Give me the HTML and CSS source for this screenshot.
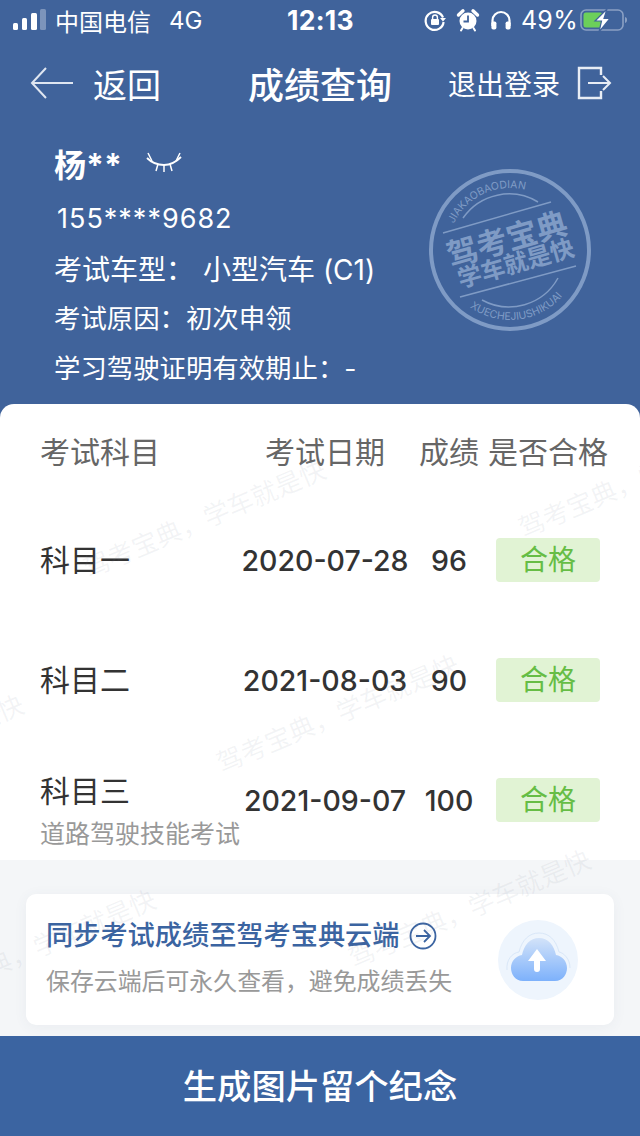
FILE: index.html
```html
<!DOCTYPE html>
<html lang="zh-CN">
<head>
  <meta charset="UTF-8" />
  <meta name="viewport" content="width=device-width, initial-scale=1.0" />
  <title>成绩查询</title>
  <link rel="stylesheet" href="styles.css">
</head>
<body>
  <div class="page">
    <header class="top">
      <div class="status">
        <div class="status-left">
          <svg class="signal" width="34" height="22" viewBox="0 0 34 22">
            <rect x="0" y="14" width="5" height="7" rx="1.5" fill="#fff"/>
            <rect x="9" y="9" width="5" height="12" rx="1.5" fill="#fff"/>
            <rect x="18" y="4" width="6" height="17" rx="1.5" fill="#fff"/>
            <rect x="27" y="0" width="6" height="21" rx="1.5" fill="#7c94bb"/>
          </svg>
          <span class="carrier">中国电信</span>
          <span class="net">4G</span>
        </div>
        <div class="clock">12:13</div>
        <div class="status-right">
          <svg width="24" height="24" viewBox="0 0 24 24" fill="none">
            <path d="M20 9.500A9 9 0 1 0 20.600 14" stroke="#fff" stroke-width="2.200"/>
            <path d="M17 10h6l-3 3.400z" fill="#fff"/>
            <rect x="8" y="11" width="8" height="6" rx="1" fill="#fff"/>
            <path d="M9.600 11V9.400a2.400 2.400 0 0 1 4.800 0V11" stroke="#fff" stroke-width="1.400"/>
          </svg>
          <svg width="24" height="24" viewBox="0 0 24 24" fill="none">
            <circle cx="12" cy="13" r="8.500" fill="#fff"/>
            <path d="M12 7.500V13.500H7.500" stroke="#40639b" stroke-width="1.800"/>
            <path d="M2.500 7 7 2.800M21.500 7 17 2.800" stroke="#fff" stroke-width="3.400" stroke-linecap="round"/>
            <path d="M6.500 20 5 22.500M17.500 20 19 22.500" stroke="#fff" stroke-width="2" stroke-linecap="round"/>
          </svg>
          <svg width="24" height="24" viewBox="0 0 24 24" fill="none">
            <path d="M3.500 18v-5.500a8.500 8.500 0 0 1 17 0V18" stroke="#fff" stroke-width="2.200"/>
            <rect x="2.400" y="13.500" width="5" height="8" rx="1.800" fill="#fff"/>
            <rect x="16.600" y="13.500" width="5" height="8" rx="1.800" fill="#fff"/>
          </svg>
          <span class="pct">49%</span>
          <svg class="battery" width="48" height="26" viewBox="0 0 48 26" fill="none">
            <rect x="1" y="3" width="42" height="20" rx="5" stroke="#8aa0c4" stroke-width="1.600"/>
            <rect x="3.500" y="5.500" width="19" height="15" rx="2.500" fill="#6ccf5a"/>
            <path d="M45 10c1.600.4 2 1.600 2 3s-.4 2.600-2 3z" fill="#8aa0c4"/>
            <path d="M27 2 15 14H21.500L19 25 30 11.500H24z" fill="#fff" stroke="#40639b" stroke-width="1.200"/>
          </svg>
        </div>
      </div>

      <nav class="nav">
        <div class="nav-back">
          <svg width="44" height="34" viewBox="0 0 44 34" fill="none" stroke="#dfe6f1" stroke-width="2">
            <path d="M43 17H2M16 2 2 17l14 15"/>
          </svg>
          <span>返回</span>
        </div>
        <div class="nav-title">成绩查询</div>
        <div class="nav-exit">
          <span>退出登录</span>
          <svg width="36" height="34" viewBox="0 0 36 34" fill="none" stroke="#e8edf5" stroke-width="2.400">
            <path d="M25 9V2H3v30h22v-7"/>
            <path d="M12 17h22M27 10l7 7-7 7" stroke-width="2"/>
          </svg>
        </div>
      </nav>

      <section class="info">
        <div class="info-name">
          <span>杨**</span>
          <svg width="36" height="22" viewBox="0 0 36 22" fill="none" stroke="#fff" stroke-width="1.800">
            <path d="M1 6c5 5 10 7 17 7s12-3 17-8"/>
            <path d="M2 1 6 9M34 1l-4 8M12 12l-2 7M24 12l2 7M18 13v7" stroke-width="1.500"/>
          </svg>
        </div>
        <div class="info-row info-phone">155****9682</div>
        <div class="info-row info-car"><span>考试车型：</span><span>小型汽车 (C1)</span></div>
        <div class="info-row info-small">考试原因：初次申领</div>
        <div class="info-row info-small">学习驾驶证明有效期止：-</div>
      </section>

      <svg class="stamp" width="170" height="170" viewBox="0 0 170 170" fill="none">
        <defs>
          <path id="arc-top" d="M28.800 58.800A62 62 0 0 1 128.800 41.200"/>
          <path id="arc-bottom" d="M44.900 142.300A70 70 0 0 0 152.600 103.100"/>
        </defs>
        <circle cx="85" cy="85" r="79" stroke="#7f9bc5" stroke-width="4"/>
        <path d="M38 53A56 56 0 0 1 113 37M133 113A56 56 0 0 1 57 135" stroke="#7f9bc5" stroke-width="1.500"/>
        <path d="M18 68 126 37M35 132 151 101" stroke="#7f9bc5" stroke-width="1.500"/>
        <g transform="rotate(-16 85 85)">
          <text class="stamp-big" x="85" y="85" text-anchor="middle">驾考宝典</text>
          <text class="stamp-small" x="87" y="108" text-anchor="middle">学车就是快</text>
        </g>
        <text class="stamp-pin"><textPath href="#arc-top">JIAKAOBAODIAN</textPath></text>
        <text class="stamp-pin"><textPath href="#arc-bottom">XUECHEJIUSHIKUAI</textPath></text>
      </svg>
    </header>

    <main class="sheet">
      <section class="results">
        <div class="grid-row head">
          <div>考试科目</div>
          <div class="cell-mid">考试日期</div>
          <div class="cell-mid">成绩</div>
          <div class="cell-mid">是否合格</div>
        </div>
        <div class="grid-row row">
          <div class="subject">科目一</div>
          <div class="cell-mid num">2020-07-28</div>
          <div class="cell-mid num">96</div>
          <div class="cell-mid"><span class="badge">合格</span></div>
        </div>
        <div class="grid-row row">
          <div class="subject">科目二</div>
          <div class="cell-mid num">2021-08-03</div>
          <div class="cell-mid num">90</div>
          <div class="cell-mid"><span class="badge">合格</span></div>
        </div>
        <div class="grid-row row">
          <div class="subject-wrap">
            <div class="subject">科目三</div>
            <div class="subject-sub">道路驾驶技能考试</div>
          </div>
          <div class="cell-mid num">2021-09-07</div>
          <div class="cell-mid num">100</div>
          <div class="cell-mid"><span class="badge">合格</span></div>
        </div>
      </section>

      <section class="sync">
        <div class="sync-card">
          <div class="sync-text">
            <div class="sync-title">
              <span>同步考试成绩至驾考宝典云端</span>
              <svg width="28" height="28" viewBox="0 0 28 28" fill="none" stroke="#3b64a1" stroke-width="1.800">
                <circle cx="14" cy="14" r="12.500"/>
                <path d="M7 14h13M15 8l6 6-6 6"/>
              </svg>
            </div>
            <div class="sync-sub">保存云端后可永久查看，避免成绩丢失</div>
          </div>
          <div class="sync-icon">
            <svg width="80" height="80" viewBox="0 0 80 80" fill="none">
              <defs>
                <linearGradient id="cloud-fill" x1="0" y1="0" x2="0" y2="1">
                  <stop offset="0" stop-color="#d3e3f9"/>
                  <stop offset="1" stop-color="#7db1fb"/>
                </linearGradient>
              </defs>
              <circle cx="40" cy="40" r="40" fill="#eef5fd"/>
              <path d="M9 50C8 40 14 33 21 32 24 20 31 13 41 13s17 7 20 19c5 1 11 7 11 16" stroke="#d9e7f8" stroke-width="1"/>
              <path d="M25 61C17 61 13 54 13 48 13 41 18 36 24 35 26 25 32 18 41 18s15 7 17 17c6 1 11 6 11 13 0 6-4 13-12 13z" fill="url(#cloud-fill)"/>
              <path d="M39 29 30 41H36V49a3 3 0 0 0 6 0V41H48z" fill="#fff"/>
            </svg>
          </div>
        </div>
      </section>

      <div class="marks">
        <span class="mark mark-a">驾考宝典，学车就是快</span>
        <span class="mark mark-b">驾考宝典，学车就是快</span>
        <span class="mark mark-c">驾考宝典，学车就是快</span>
        <span class="mark mark-d">驾考宝典，学车就是快</span>
        <span class="mark mark-e">驾考宝典，学车就是快</span>
        <span class="mark mark-f">驾考宝典，学车就是快</span>
      </div>
    </main>

    <button class="save">生成图片留个纪念</button>
  </div>
</body>
</html>
```

FILE: styles.css
```css
* {
  box-sizing: border-box;
}
body {
  margin: 0;
  font-family: Inter, "Noto Sans CJK SC", sans-serif;
  background-color: #fff;
  color: #333;
}
.page {
  width: 640px;
  height: 1136px;
  overflow: hidden;
  background-color: #40639b;
  display: flex;
  flex-direction: column;
}

/* blue header */
.top {
  position: relative;
  height: 404px;
  background-color: #40639b;
  color: #fff;
}
.status {
  height: 40px;
  padding: 0 12px 0 13px;
  display: flex;
  align-items: center;
  font-size: 24px;
}
.status-left {
  width: 274px;
  display: flex;
  align-items: center;
}
.signal {
  margin-right: 8px;
}
.net {
  margin-left: 18px;
  font-size: 24px;
}
.clock {
  font-weight: 700;
  font-size: 26.500px;
  letter-spacing: 0.3px;
}
.status-right {
  margin-left: auto;
  display: flex;
  align-items: center;
  gap: 9px;
}
.pct {
  font-size: 25px;
  letter-spacing: 0.3px;
  margin-left: -1px;
}
.battery {
  margin-left: -7px;
}
.nav {
  height: 90px;
  padding: 0 30px 4px;
  display: flex;
  align-items: center;
}
.nav-back {
  width: 218px;
  flex: none;
  display: flex;
  align-items: center;
  gap: 19px;
  font-size: 34px;
}
.nav-title {
  flex: none;
  width: 144px;
  font-size: 36px;
  font-weight: 500;
}
.nav-exit {
  margin-left: auto;
  margin-right: -2px;
  display: flex;
  align-items: center;
  gap: 16px;
  font-size: 28px;
}
.info {
  padding: 8px 0 0 54px;
}
.info-name {
  height: 50px;
  margin-bottom: 3px;
  display: flex;
  align-items: center;
  gap: 24px;
  font-size: 32px;
  font-weight: 700;
}
.info-row {
  height: 50px;
  display: flex;
  align-items: center;
  font-size: 26.400px;
}
.info-phone {
  margin-left: 3px;
  padding-top: 4px;
  font-size: 27px;
  letter-spacing: 1px;
}
.info-car {
  gap: 9px;
  padding-top: 3px;
  font-size: 28px;
}
.stamp {
  position: absolute;
  left: 425px;
  top: 165px;
}
.stamp-big {
  fill: #7f9bc5;
  font-size: 31px;
  font-weight: 700;
}
.stamp-small {
  fill: #7f9bc5;
  font-size: 24px;
  font-weight: 700;
}
.stamp-pin {
  fill: #7f9bc5;
  font-size: 10.500px;
}

/* white sheet */
.sheet {
  position: relative;
  flex: 1;
  background-color: #fff;
  border-radius: 14px 14px 0 0;
  display: flex;
  flex-direction: column;
  overflow: hidden;
}
.results {
  height: 456px;
}
.grid-row {
  display: grid;
  grid-template-columns: 200px 170px 78px 120px;
  padding-left: 40px;
  align-items: center;
}
.head {
  height: 96px;
  padding-bottom: 4px;
  font-size: 30px;
  color: #666;
}
.row {
  height: 120px;
}
.cell-mid {
  text-align: center;
  white-space: nowrap;
}
.subject {
  font-size: 30px;
  line-height: 48px;
  color: #333;
}
.subject-wrap {
  align-self: start;
  margin-top: 27px;
}
.subject-sub {
  margin-top: 1px;
  font-size: 25px;
  line-height: 36px;
  color: #999;
  white-space: nowrap;
}
.num {
  font-size: 28.500px;
  font-weight: 500;
  color: #333;
}
.badge {
  display: inline-block;
  width: 104px;
  height: 44px;
  line-height: 44px;
  border-radius: 4px;
  background-color: #e1f3d4;
  color: #66bd45;
  font-size: 28px;
  vertical-align: middle;
}

/* cloud sync */
.sync {
  flex: 1;
  padding: 34px 26px 0;
  background-color: #f4f6f8;
}
.sync-card {
  height: 131px;
  padding: 0 36px 0 20px;
  background-color: #fff;
  border-radius: 10px;
  box-shadow: 0 2px 14px rgba(60, 80, 120, 0.06);
  display: flex;
  align-items: center;
  justify-content: space-between;
}
.sync-text {
  padding-bottom: 4px;
}
.sync-title {
  display: flex;
  align-items: center;
  gap: 10px;
  font-size: 27.200px;
  font-weight: 500;
  color: #3b64a1;
  line-height: 40px;
}
.sync-sub {
  margin-top: 8px;
  font-size: 23.900px;
  color: #999;
  line-height: 36px;
}
.sync-icon {
  height: 80px;
}

/* diagonal watermark */
.marks {
  position: absolute;
  inset: 0;
  pointer-events: none;
}
.mark {
  position: absolute;
  font-size: 26px;
  line-height: 30px;
  color: rgba(120, 130, 150, 0.09);
  white-space: nowrap;
  transform: rotate(-23deg);
  transform-origin: left center;
}
.mark-a { left: 85px; top: 151px; }
.mark-b { left: 520px; top: 111px; }
.mark-c { left: -217px; top: 386px; }
.mark-d { left: 218px; top: 346px; }
.mark-e { left: 350px; top: 541px; }
.mark-f { left: -85px; top: 581px; }

.save {
  height: 100px;
  flex: none;
  padding-bottom: 5px;
  border: none;
  background-color: #3b64a1;
  color: #fff;
  font-family: inherit;
  font-size: 34.300px;
  font-weight: 500;
}
```
